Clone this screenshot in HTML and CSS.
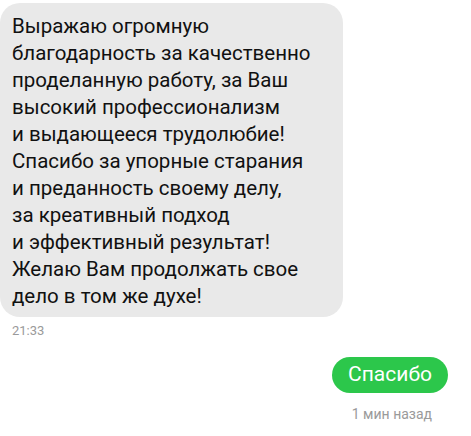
FILE: index.html
```html
<!DOCTYPE html>
<html lang="ru">
<head>
<meta charset="utf-8">
<link rel="stylesheet" href="styles.css">
</head>
<body>
<div class="chat">
  <div class="msg in">
    <div class="bubble gray">Выражаю огромную<br>благодарность за качественно<br>проделанную работу, за Ваш<br>высокий профессионализм<br>и выдающееся трудолюбие!<br>Спасибо за упорные старания<br>и преданность своему делу,<br>за креативный подход<br>и эффективный результат!<br>Желаю Вам продолжать свое<br>дело в том же духе!</div>
    <div class="time">21:33</div>
  </div>
  <div class="msg out">
    <div class="bubble green">Спасибо</div>
    <div class="time">1 мин назад</div>
  </div>
</div>
</body>
</html>
```
FILE: styles.css
```css
html, body {
  margin: 0;
  padding: 0;
  background: #ffffff;
}
body {
  font-family: Roboto, "Noto Sans", sans-serif;
  width: 471px;
  height: 436px;
  overflow: hidden;
}
.chat {
  display: flex;
  flex-direction: column;
  padding: 3px 23px 0 0;
}
.msg {
  display: flex;
  flex-direction: column;
}
.msg.in {
  align-items: flex-start;
}
.msg.out {
  align-items: flex-end;
  margin-top: 18px;
}
.bubble {
  font-size: 20.5px;
  line-height: 27px;
  color: #111;
}
.gray {
  background: #e9e9e9;
  border-radius: 20px;
  padding: 10px 12px 7px 12px;
  width: 319px;
}
.green {
  background: #2cc74b;
  color: #fff;
  border-radius: 18px;
  padding: 4px 16px 5px 16px;
  font-size: 21px;
}
.time {
  color: #9a9a9a;
  line-height: 16px;
}
.in .time {
  font-size: 13px;
  margin: 6px 0 0 12px;
}
.out .time {
  font-size: 14px;
  margin: 13px 16px 0 0;
}
```
